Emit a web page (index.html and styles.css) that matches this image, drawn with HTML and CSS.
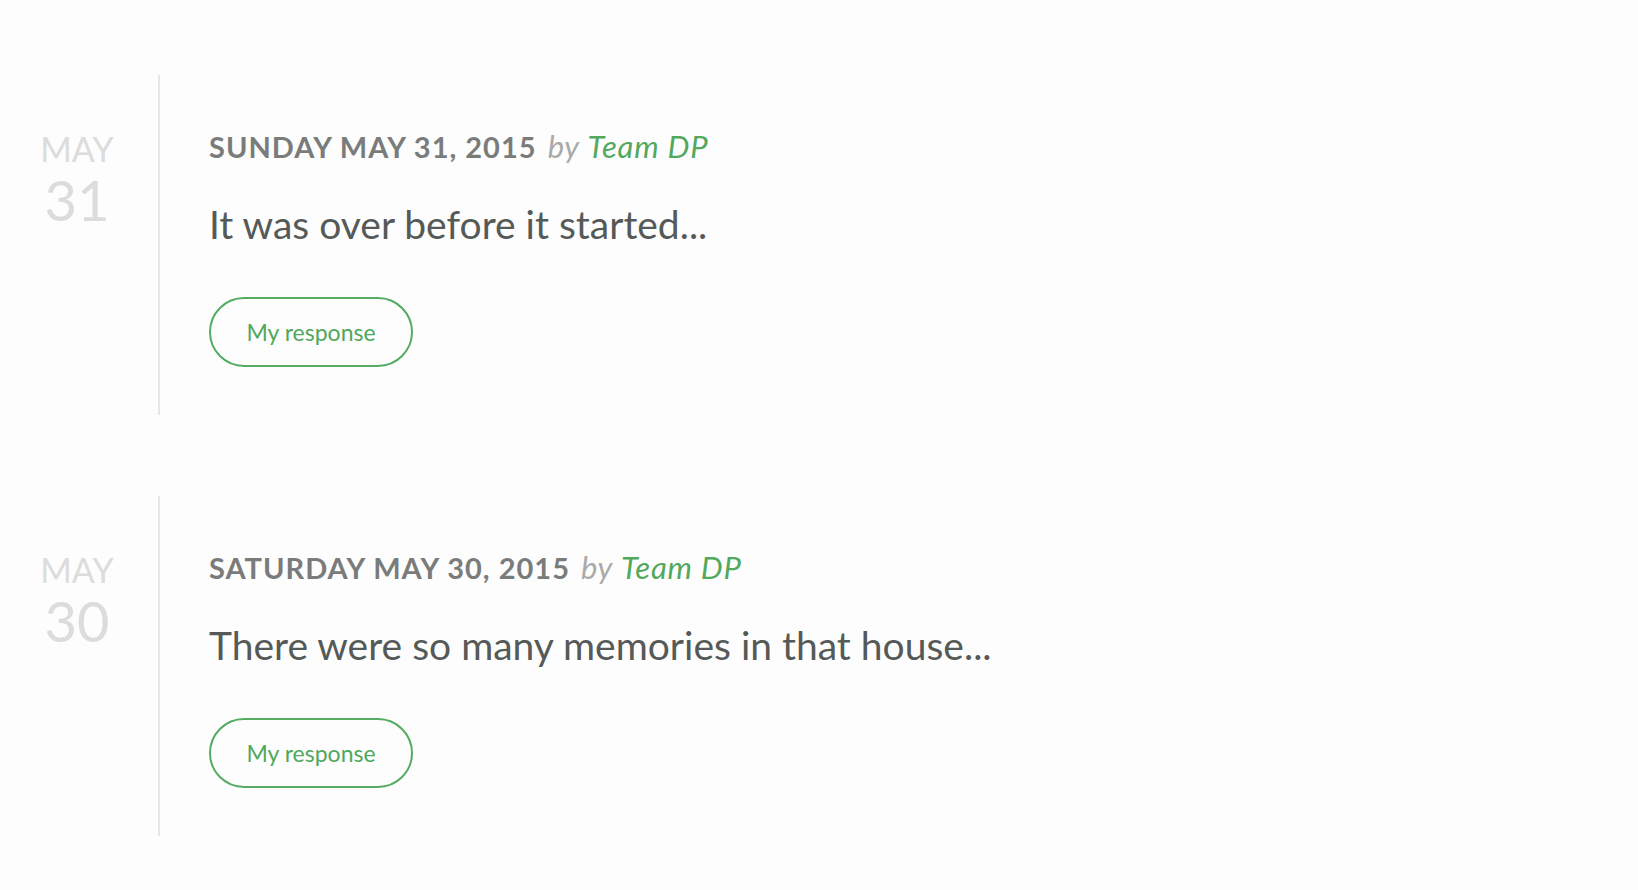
FILE: index.html
```html
<!DOCTYPE html>
<html lang="en">
<head>
<meta charset="utf-8">
<title>Timeline</title>
<link rel="stylesheet" href="styles.css">
</head>
<body>
<main class="timeline">
  <article class="entry">
    <div class="date">
      <span class="date-month">MAY</span>
      <span class="date-day">31</span>
    </div>
    <div class="content">
      <h2 class="entry-title">SUNDAY MAY 31, 2015 <span class="by">by</span> <span class="author">Team DP</span></h2>
      <p class="entry-text">It was over before it started...</p>
      <a class="btn" href="#">My response</a>
    </div>
  </article>
  <article class="entry">
    <div class="date">
      <span class="date-month">MAY</span>
      <span class="date-day">30</span>
    </div>
    <div class="content">
      <h2 class="entry-title">SATURDAY MAY 30, 2015 <span class="by">by</span> <span class="author">Team DP</span></h2>
      <p class="entry-text">There were so many memories in that house...</p>
      <a class="btn" href="#">My response</a>
    </div>
  </article>
</main>
</body>
</html>
```

FILE: styles.css
```css
html, body {
  margin: 0;
  padding: 0;
  background: #fdfdfd;
}
body {
  font-family: Lato, "Open Sans", sans-serif;
  color: #555a58;
}
.timeline {
  display: flex;
  flex-direction: column;
  gap: 81px;
  padding-top: 75px;
}
.entry {
  display: flex;
  height: 340px;
}
.date {
  width: 158px;
  box-sizing: border-box;
  padding-top: 59px;
  padding-right: 4px;
  display: flex;
  flex-direction: column;
  align-items: center;
  color: #dcdcdc;
}
.date-month {
  font-size: 34px;
  line-height: 30px;
}
.date-day {
  font-size: 56px;
  line-height: 50px;
  margin-top: 11px;
}
.content {
  border-left: 2px solid #e6e6e6;
  padding-left: 49px;
  padding-top: 53px;
  display: flex;
  flex-direction: column;
  align-items: flex-start;
}
.entry-title {
  margin: 0;
  font-size: 29px;
  line-height: 36px;
  font-weight: 700;
  letter-spacing: 1px;
  color: #7a7c7b;
}
.by {
  font-weight: 400;
  font-style: italic;
  font-size: 31px;
  letter-spacing: 0.5px;
  color: #aaaaaa;
  margin-left: 3px;
}
.author {
  font-weight: 400;
  font-style: italic;
  font-size: 31px;
  letter-spacing: 0.8px;
  color: #52a95e;
}
.entry-text {
  margin: 36px 0 0;
  font-size: 39px;
  line-height: 47px;
  color: #555a58;
}
.btn {
  margin-top: 49px;
  display: inline-flex;
  align-items: center;
  justify-content: center;
  width: 204px;
  height: 70px;
  box-sizing: border-box;
  border: 2px solid #55ab62;
  border-radius: 35px;
  color: #4fa85c;
  font-size: 23px;
  text-decoration: none;
}
```
